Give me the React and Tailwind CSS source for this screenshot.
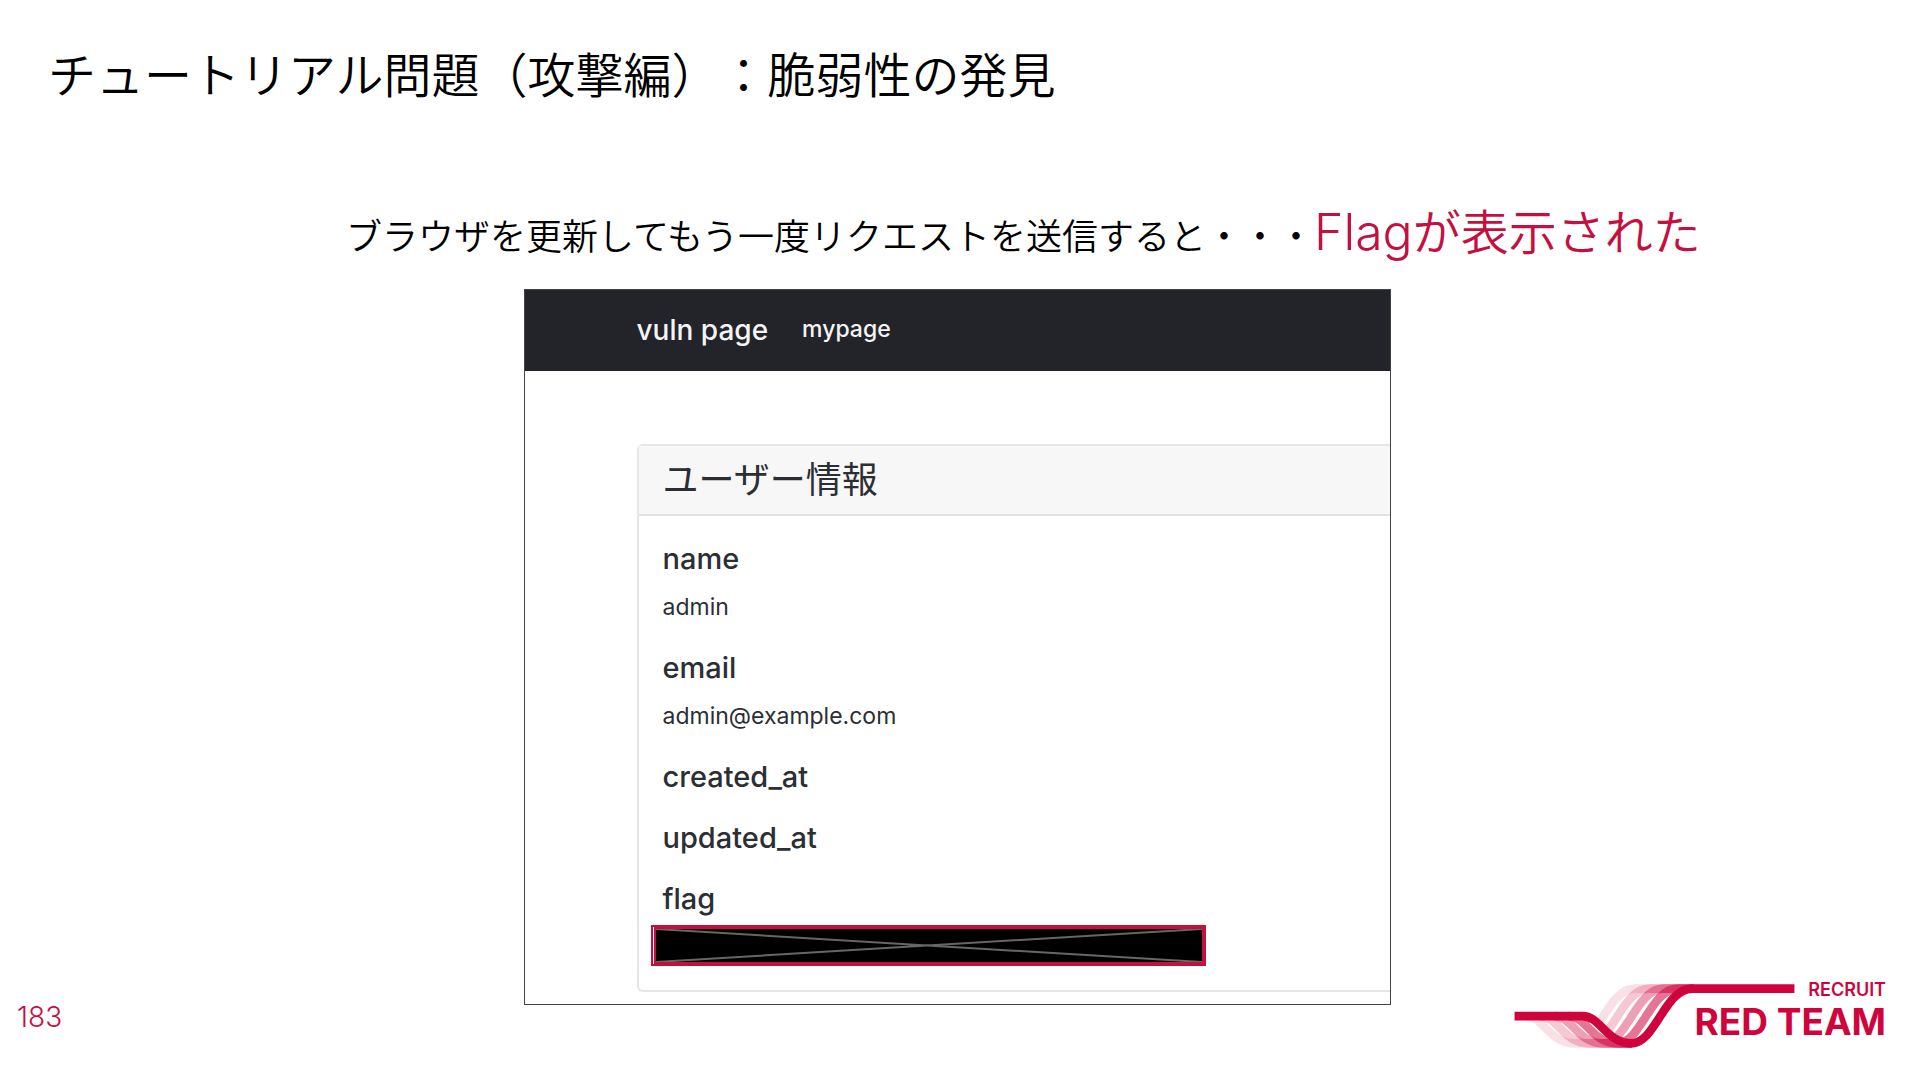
const RED = "#d0043c";

const user = [
  { label: "name", value: "admin" },
  { label: "email", value: "admin@example.com" },
  { label: "created_at" },
  { label: "updated_at" },
];

const ghosts = [
  { dx: -172, opacity: 0.12 },
  { dx: -129, opacity: 0.22 },
  { dx: -86, opacity: 0.38 },
  { dx: -43, opacity: 0.55 },
];

const MAIN = "M0 97 H205 C260 97 276 179 353 179 C424 179 453 14 535 14 H844";

function Wave() {
  return (
    <svg viewBox="0 0 844 196" className="h-[65px] w-[281px]" fill="none" stroke={RED} strokeWidth="26" aria-hidden="true">
      <clipPath id="above-wave">
        <path d={`${MAIN} V-20 H0 Z`} />
      </clipPath>
      {ghosts.map(({ dx, opacity }) => (
        <g key={dx}>
          <path opacity={opacity} d={`M${205 + dx} 97 C${260 + dx} 97 ${276 + dx} 179 ${353 + dx} 179 H353`} />
          <path
            opacity={opacity}
            clipPath="url(#above-wave)"
            d={`M${353 + dx} 179 C${424 + dx} 179 ${453 + dx} 14 ${535 + dx} 14 H540`}
          />
        </g>
      ))}
      <path d={MAIN} />
    </svg>
  );
}

function Logo() {
  return (
    <div className="relative h-[65px] w-[372px] font-['Inter',sans-serif] text-[#d0043c]">
      <Wave />
      <div className="absolute right-0 top-0 flex flex-col items-end">
        <span className="text-[18px] font-semibold leading-[12px]">RECRUIT</span>
        <span className="mt-3 text-[37px] font-bold leading-[28px]">RED TEAM</span>
      </div>
    </div>
  );
}

function BrowserShot() {
  return (
    <section className="w-[867px] max-w-full overflow-hidden border border-[#444] bg-white font-['Inter','Noto_Sans_CJK_JP',sans-serif] text-[#2b2e33]">
      <nav className="flex h-[81px] items-center gap-[34px] bg-[#222429] pb-[2px] pl-28 font-medium text-[#f4f4f5]">
        <a href="#top" className="text-[28px]">vuln page</a>
        <a href="#mypage" className="text-[23px]">mypage</a>
      </nav>
      <div className="pb-3 pl-28 pt-[73px]">
        <div className="rounded-l-md border-2 border-r-0 border-[#e6e6e6] pb-6">
          <h2 className="border-b-2 border-[#e3e3e3] bg-[#f7f7f7] py-3 pl-6 text-[36px] leading-[44px]">ユーザー情報</h2>
          <dl className="pl-6 pt-6">
            {user.map((f) => (
              <div key={f.label} className="pb-3">
                <dt className="mb-3 text-[29px] font-medium leading-[37px]">{f.label}</dt>
                {f.value && <dd className="mb-3 text-[23px] leading-[36px]">{f.value}</dd>}
              </div>
            ))}
            <div>
              <dt className="text-[29px] font-medium leading-[37px]">flag</dt>
              <dd className="-ml-3 mt-2 h-[41px] w-[555px] border-2 border-[#c4103f]">
                <div className="ml-px h-full border-2 border-[#c4103f] bg-black">
                  <svg viewBox="0 0 547 33" className="h-full w-full" preserveAspectRatio="none" stroke="#666" strokeWidth="2" aria-hidden="true">
                    <path d="M0 0 L547 33 M0 33 L547 0" />
                  </svg>
                </div>
              </dd>
            </div>
          </dl>
        </div>
      </div>
    </section>
  );
}

export default function App() {
  return (
    <main className="flex min-h-screen flex-col bg-white font-['Noto_Sans_CJK_JP',sans-serif] text-black [text-spacing-trim:space-all]">
      <h1 className="pl-12 pt-9 text-[48px] font-[350] leading-[72px]">チュートリアル問題（攻撃編）：脆弱性の発見</h1>
      <p className="mt-[85px] pl-[346px] text-[36px] font-[350] leading-[72px]">
        ブラウザを更新してもう一度リクエストを送信すると・・・<span className="text-[48px] text-[#c4103f]"><span className="font-['Inter',sans-serif] text-[50px] font-light">Flag</span>が表示された</span>
      </p>
      <div className="mt-[19px] flex justify-center pr-[6px]">
        <BrowserShot />
      </div>
      <footer className="-mt-[21px] flex items-center justify-between pb-[30px] pl-[17px] pr-[34px]">
        <span className="font-['Inter',sans-serif] text-[28px] font-light text-[#c4103f]">183</span>
        <Logo />
      </footer>
    </main>
  );
}
